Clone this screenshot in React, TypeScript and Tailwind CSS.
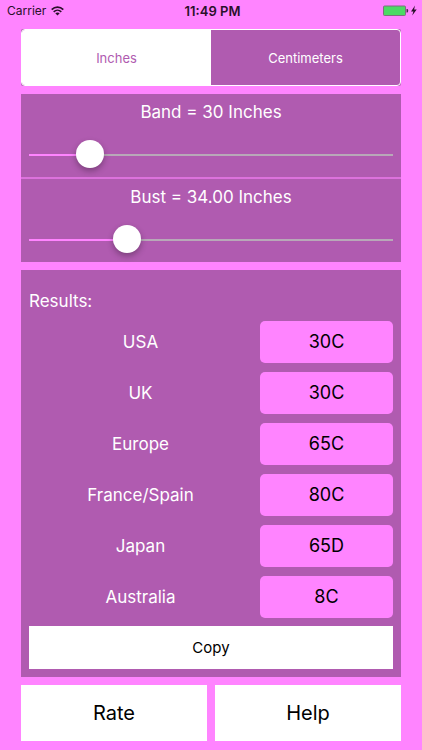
import { useState } from "react";
import type { CSSProperties } from "react";

type Unit = "Inches" | "Centimeters";

const RESULTS: [string, string][] = [
  ["USA", "30C"],
  ["UK", "30C"],
  ["Europe", "65C"],
  ["France/Spain", "80C"],
  ["Japan", "65D"],
  ["Australia", "8C"],
];

function StatusBar() {
  return (
    <header className="grid h-[22px] grid-cols-3 items-center pl-[7px] pr-1 text-[12px] leading-4 text-[#2a102a]">
      <div className="flex items-center gap-[5px]">
        <span>Carrier</span>
        <svg className="h-[10px] w-[13px]" viewBox="0 0 13 10" fill="none" aria-hidden="true">
          <path d="M0.7 3.6C4 0.4 9 0.4 12.3 3.6" stroke="currentColor" strokeWidth="1.7" />
          <path d="M2.7 5.8C4.9 3.7 8.1 3.7 10.3 5.8" stroke="currentColor" strokeWidth="1.6" />
          <path d="M6.5 9.5L4.3 7.3C5.5 6.2 7.5 6.2 8.7 7.3Z" fill="currentColor" />
        </svg>
      </div>
      <span className="text-center text-[13px] font-semibold">11:49 PM</span>
      <svg className="h-3 w-9 justify-self-end" viewBox="0 0 36 12" aria-hidden="true">
        <rect x="1.5" y="1" width="22" height="9.5" rx="1" fill="#4cd964" stroke="#7d6f7d" />
        <path d="M24.5 4h0.8q0.9 0 0.9 1.7t-0.9 1.7h-0.8z" fill="#4a2a4a" />
        <path d="M33 0.6L29 6.4h2.4l-1.2 4.2 4.5-6h-2.6z" fill="#2a102a" />
      </svg>
    </header>
  );
}

function UnitSwitch({ unit, onChange }: { unit: Unit; onChange: (unit: Unit) => void }) {
  return (
    <div role="radiogroup" aria-label="Units" className="rounded-[2px] bg-[#b05bb0]">
      <div className="grid h-[57px] grid-cols-2 overflow-hidden rounded-[4px] border border-white">
        {(["Inches", "Centimeters"] as const).map((name) => (
          <label
            key={name}
            className="flex cursor-pointer items-center justify-center text-[13px] leading-4 text-white has-checked:bg-white has-checked:text-[#b05bb0]"
          >
            <input
              type="radio"
              name="unit"
              className="sr-only"
              checked={unit === name}
              onChange={() => onChange(name)}
            />
            {name}
          </label>
        ))}
      </div>
    </div>
  );
}

interface MeasureProps {
  id: string;
  label: string;
  min: number;
  max: number;
  step: number;
  digits: number;
  value: number;
  unit: Unit;
  onChange: (value: number) => void;
}

function Measure({ id, label, min, max, step, digits, value, unit, onChange }: MeasureProps) {
  const fill = { "--fill": `${((value - min) / (max - min)) * 100}%` } as CSSProperties;
  return (
    <div className="flex flex-col bg-[#b05bb0] px-2 pt-[6px] pb-2">
      <label htmlFor={id} className="text-center text-[17px] leading-6 text-white">
        {label} = {value.toFixed(digits)} {unit}
      </label>
      <input
        id={id}
        type="range"
        min={min}
        max={max}
        step={step}
        value={value}
        onChange={(e) => onChange(Number(e.target.value))}
        style={fill}
        className="mt-[17px] h-7 w-full cursor-pointer appearance-none bg-transparent [&::-webkit-slider-runnable-track]:h-[2px] [&::-webkit-slider-runnable-track]:bg-[linear-gradient(to_right,#ff84ff_var(--fill),#b8a8b8_var(--fill))] [&::-webkit-slider-thumb]:-mt-[14px] [&::-webkit-slider-thumb]:size-7 [&::-webkit-slider-thumb]:appearance-none [&::-webkit-slider-thumb]:rounded-full [&::-webkit-slider-thumb]:bg-white [&::-webkit-slider-thumb]:shadow-[0_3px_6px_rgba(0,0,0,0.3)]"
      />
    </div>
  );
}

export default function App() {
  const [unit, setUnit] = useState<Unit>("Inches");
  const [band, setBand] = useState(30);
  const [bust, setBust] = useState(34);

  return (
    <div className="min-h-screen bg-[#ff84ff] font-[Inter,'Liberation_Sans',sans-serif]">
      <StatusBar />
      <main className="flex flex-col gap-2 px-[21px] pt-[7px] pb-2">
        <UnitSwitch unit={unit} onChange={setUnit} />

        <section className="flex flex-col gap-[2px] bg-[#dc72dc]">
          <Measure id="band" label="Band" min={23} max={73} step={1} digits={0} value={band} unit={unit} onChange={setBand} />
          <Measure id="bust" label="Bust" min={23} max={67} step={0.25} digits={2} value={bust} unit={unit} onChange={setBust} />
        </section>

        <section className="flex flex-col bg-[#b05bb0] px-2 pt-[19px] pb-2">
          <h2 className="text-[17px] leading-6 text-white">Results:</h2>
          <table className="mt-2 block leading-6">
            <tbody className="flex flex-col gap-[9px]">
              {RESULTS.map(([country, size]) => (
                <tr key={country} className="grid h-[42px] grid-cols-[1fr_133px] items-center gap-2">
                  <th scope="row" className="text-center text-[17px] font-normal text-white">
                    {country}
                  </th>
                  <td className="flex h-full items-center justify-center rounded-[5px] bg-[#ff84ff] text-[18px] text-black">
                    {size}
                  </td>
                </tr>
              ))}
            </tbody>
          </table>
          <button type="button" className="mt-2 h-[43px] cursor-pointer bg-white text-[15px] leading-5 text-black">
            Copy
          </button>
        </section>

        <div className="grid grid-cols-2 gap-2 text-[20px] leading-6 text-black">
          <button type="button" className="h-14 cursor-pointer bg-white">
            Rate
          </button>
          <button type="button" className="h-14 cursor-pointer bg-white">
            Help
          </button>
        </div>
      </main>
    </div>
  );
}
